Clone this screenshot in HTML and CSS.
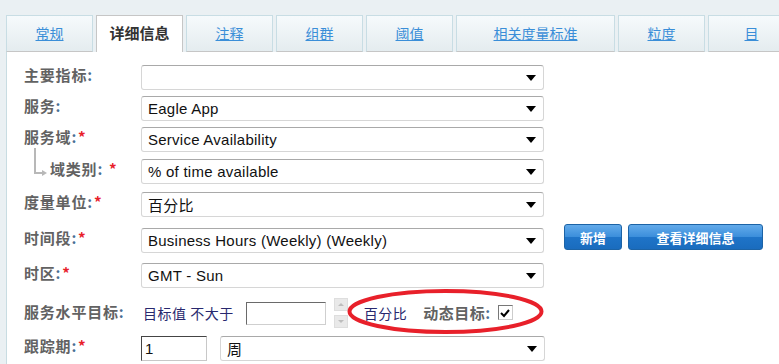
FILE: index.html
```html
<!DOCTYPE html>
<html lang="zh-CN">
  <head>
    <meta charset="UTF-8" />
    <title>详细信息</title>
    <link rel="stylesheet" href="styles.css">
  </head>
  <body>
    <!-- Tab strip -->
    <div class="tabs">
      <a class="tab" href="#">常规</a>
      <span class="tab active">详细信息</span>
      <a class="tab" href="#">注释</a>
      <a class="tab" href="#">组群</a>
      <a class="tab" href="#">阈值</a>
      <a class="tab tab-wide" href="#">相关度量标准</a>
      <a class="tab" href="#">粒度</a>
      <a class="tab" href="#">目</a>
    </div>

    <div class="panel">
      <div class="form">
        <div class="row r1">
          <div class="label">主要指标<span class="colon">:</span></div>
          <div class="select"><span></span><i class="arrow"></i></div>
        </div>

        <div class="row r2">
          <div class="label">服务<span class="colon">:</span></div>
          <div class="select"><span>Eagle App</span><i class="arrow"></i></div>
        </div>

        <div class="row r3">
          <div class="label">服务域<span class="colon">:</span><span class="req">*</span></div>
          <div class="select"><span>Service Availability</span><i class="arrow"></i></div>
        </div>

        <div class="row r4">
          <div class="label label-sub">
            <svg class="tree" width="16" height="28" viewBox="0 0 16 28">
              <path d="M2 0 V25 H10" fill="none" stroke="#b8b8b8" stroke-width="2" />
              <path d="M9 22 L14 25 L9 28 Z" fill="#b8b8b8" />
            </svg>
            域类别<span class="colon">:</span><span class="req req-gap">*</span>
          </div>
          <div class="select"><span>% of time available</span><i class="arrow"></i></div>
        </div>

        <div class="row r5">
          <div class="label">度量单位<span class="colon">:</span><span class="req">*</span></div>
          <div class="select"><span>百分比</span><i class="arrow"></i></div>
        </div>

        <div class="row r6">
          <div class="label">时间段<span class="colon">:</span><span class="req">*</span></div>
          <div class="select"><span>Business Hours (Weekly) (Weekly)</span><i class="arrow"></i></div>
          <div class="buttons">
            <button class="btn btn-add">新增</button>
            <button class="btn btn-detail">查看详细信息</button>
          </div>
        </div>

        <div class="row r7">
          <div class="label">时区<span class="colon">:</span><span class="req">*</span></div>
          <div class="select"><span>GMT - Sun</span><i class="arrow"></i></div>
        </div>

        <div class="row r8">
          <div class="label">服务水平目标<span class="colon">:</span></div>
          <div class="target">
            <span class="note">目标值 不大于</span>
            <input class="num" type="text" value="" />
            <div class="spin">
              <span class="spin-btn"><i class="up"></i></span>
              <span class="spin-btn"><i class="down"></i></span>
            </div>
            <span class="note unit">百分比</span>
            <span class="dyn">动态目标<span class="colon">:</span></span>
            <span class="check">
              <svg width="12" height="12" viewBox="0 0 12 12">
                <path d="M2 6 L5 9 L10 3" fill="none" stroke="#000" stroke-width="2" />
              </svg>
            </span>
          </div>
          <!-- red annotation ring -->
          <svg class="ring" width="199" height="47" viewBox="0 0 199 47">
            <ellipse cx="99.5" cy="23.5" rx="96" ry="20.5" fill="none" stroke="#e8202a" stroke-width="4" />
          </svg>
        </div>

        <div class="row r9">
          <div class="label">跟踪期<span class="colon">:</span><span class="req">*</span></div>
          <input class="period" type="text" value="1" />
          <div class="select select-short"><span>周</span><i class="arrow"></i></div>
        </div>
      </div>
    </div>
  </body>
</html>
```

FILE: styles.css
```css
body {
  margin: 0;
  background: #eaf0f3;
  font-family: "Liberation Sans", "Noto Sans CJK SC", sans-serif;
  color: #222;
  height: 364px;
  overflow: hidden;
}

/* Tabs */
.tabs {
  display: flex;
  gap: 3px;
  padding: 15px 0 0 6px;
  white-space: nowrap;
}

.tab {
  flex: none;
  box-sizing: border-box;
  width: 87px;
  height: 37px;
  border: 1px solid #c8dde4;
  border-bottom-color: #c6c6c6;
  background: linear-gradient(#f6fafc, #e4ecef);
  font-family: "Noto Sans CJK SC", sans-serif;
  font-size: 14px;
  line-height: 34px;
  text-align: center;
  color: #3a8ed8;
  text-decoration: underline;
}

.tab-wide {
  width: 159px;
}

.tab.active {
  background: #fff;
  border-color: #c6c6c6;
  border-bottom: none;
  color: #333;
  font-size: 15px;
  font-weight: bold;
  text-decoration: none;
  position: relative;
  z-index: 1;
}

/* White content panel */
.panel {
  background: #fff;
  border-left: 1px solid #c8dce2;
  margin-left: 6px;
  height: 312px;
}

.form {
  padding: 13px 0 0 17px;
}

.row {
  display: flex;
  align-items: flex-start;
  position: relative;
}

.r1,
.r2 { height: 31px; }
.r3 { height: 32px; }
.r4 { height: 33px; }
.r5 { height: 36px; }
.r6 { height: 35px; }
.r7 { height: 34px; }
.r8 { height: 39px; }

/* Labels */
.label {
  flex: none;
  width: 117px;
  font-family: "Noto Sans CJK SC", sans-serif;
  font-size: 15px;
  font-weight: bold;
  line-height: 20px;
  letter-spacing: 0.8px;
  color: #626262;
}

.colon {
  color: #4a6f95;
}

.req {
  color: #e8202a;
  margin-left: 1px;
}

.req-gap {
  margin-left: 6px;
}

.label-sub {
  display: flex;
  align-items: flex-start;
}

.tree {
  flex: none;
  margin: -11px 1px 0 9px;
}

/* Fake select boxes */
.select {
  box-sizing: border-box;
  width: 403px;
  height: 25px;
  border: 1px solid #d6d6d6;
  border-top-color: #a9a9a9;
  border-radius: 3px;
  background: #fff;
  display: flex;
  align-items: center;
  justify-content: space-between;
  padding: 0 6px;
  font-size: 15px;
  letter-spacing: 0.25px;
  color: #111;
}

.select-short {
  width: 325px;
  margin-left: 13px;
}

.arrow {
  width: 0;
  height: 0;
  border-left: 5px solid transparent;
  border-right: 5px solid transparent;
  border-top: 6px solid #000;
  margin-right: 1px;
}

/* Buttons */
.buttons {
  display: flex;
  gap: 6px;
  margin: -4px 0 0 20px;
}

.btn {
  height: 26px;
  border: 1px solid #1c63a6;
  border-radius: 3px;
  background: linear-gradient(#62aaea, #3b8edb 50%, #1f74c8 51%, #1a6cbe);
  color: #fff;
  font-family: "Noto Sans CJK SC", sans-serif;
  font-size: 13px;
  font-weight: bold;
  padding: 0;
}

.btn-add { width: 58px; }
.btn-detail { width: 135px; }

/* Service level target row */
.target {
  display: flex;
  align-items: center;
  height: 31px;
}

.r8 .label {
  padding-top: 5px;
}

.note {
  font-family: "Noto Sans CJK SC", sans-serif;
  font-size: 14px;
  letter-spacing: 0.5px;
  color: #28286e;
  margin-left: 2px;
}

.num {
  box-sizing: border-box;
  width: 80px;
  height: 23px;
  margin: 2px 0 0 12px;
  border: 1px solid #cfcfcf;
  border-top-color: #6a6a6a;
  border-left-color: #6a6a6a;
}

.spin {
  display: flex;
  flex-direction: column;
  gap: 4px;
  margin-left: 8px;
}

.spin-btn {
  width: 14px;
  height: 13px;
  background: #e9e9e9;
  border: 1px solid #dedede;
  box-sizing: border-box;
  display: flex;
  align-items: center;
  justify-content: center;
}

.up,
.down {
  width: 0;
  height: 0;
  border-left: 3px solid transparent;
  border-right: 3px solid transparent;
}

.up { border-bottom: 3px solid #bdbdbd; }
.down { border-top: 3px solid #bdbdbd; }

.unit {
  margin-left: 16px;
}

.dyn {
  font-family: "Noto Sans CJK SC", sans-serif;
  font-size: 15px;
  font-weight: bold;
  letter-spacing: 0.5px;
  color: #626262;
  margin-left: 16px;
}

.check {
  box-sizing: border-box;
  width: 15px;
  height: 15px;
  border: 1px solid #777;
  border-right-color: #ccc;
  border-bottom-color: #ccc;
  margin-left: 7px;
  display: flex;
  align-items: center;
  justify-content: center;
}

.ring {
  position: absolute;
  left: 322px;
  top: -9px;
  pointer-events: none;
}

/* Tracking period */
.period {
  box-sizing: border-box;
  width: 66px;
  height: 25px;
  border: 1px solid #c8c8c8;
  border-top-color: #444;
  border-left-color: #444;
  padding: 0 3px;
  font-size: 15px;
  color: #111;
  font-family: "Liberation Sans", sans-serif;
}
```
